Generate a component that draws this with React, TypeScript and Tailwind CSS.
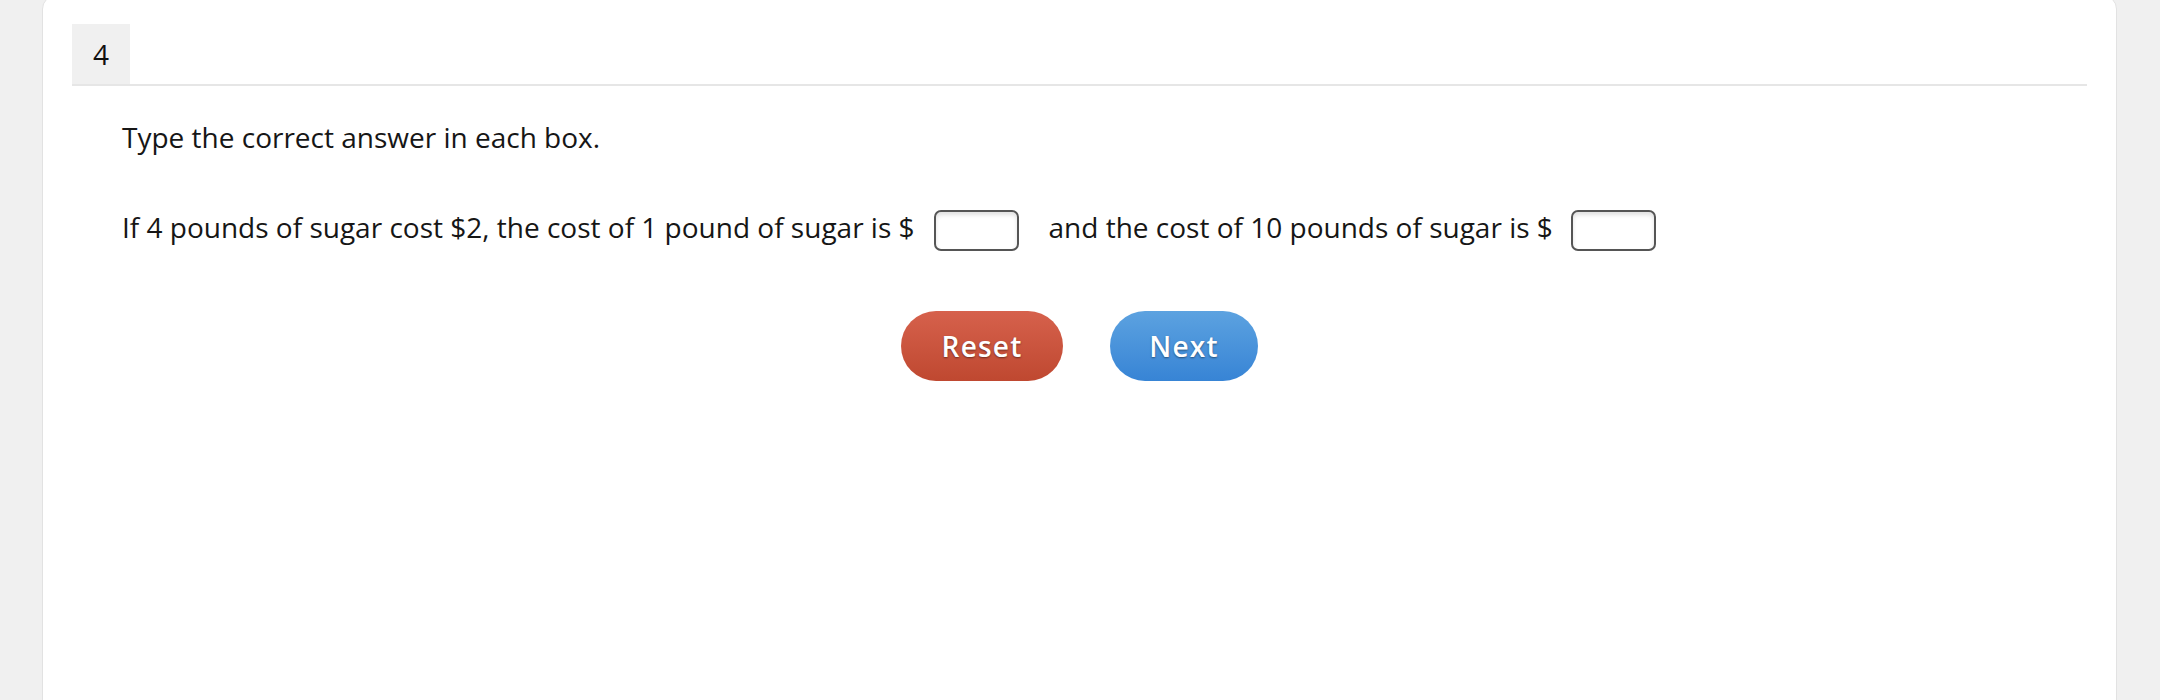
import React from "react";

function AnswerBox() {
  return (
    <input
      type="text"
      aria-label="answer"
      className="block w-[85px] h-[41px] rounded-[7px] border-2 border-[#555555] bg-white p-0 shadow-[inset_0_3px_4px_rgba(0,0,0,0.12)] outline-none"
    />
  );
}

export default function App() {
  return (
    <div
      className="w-[2160px] h-[700px] overflow-hidden bg-[#f0f0f0] pl-[42px] pr-[43px]"
      style={{ fontFamily: '"Open Sans", "Liberation Sans", sans-serif' }}
    >
      <div className="-mt-[5px] h-[740px] rounded-[14px] border border-[#e2e2e2] bg-white px-[29px] pt-[28px] text-[#161616]">
        <div className="flex border-b-2 border-[#e6e6e6]">
          <div className="flex h-[60px] w-[58px] items-center justify-center bg-[#f0f0f0] text-[28px] font-medium leading-none text-[#111]">
            4
          </div>
        </div>
        <div className="px-[50px] pt-[30px] text-[28px] leading-[1.5]">
          <p>Type the correct answer in each box.</p>
          <p className="mt-[48px]">
            If 4 pounds of sugar cost $2, the cost of 1 pound of sugar is $
            <span className="ml-[19px] mr-[30px] inline-block align-middle">
              <AnswerBox />
            </span>
            and the cost of 10 pounds of sugar is $
            <span className="ml-[18px] inline-block align-middle">
              <AnswerBox />
            </span>
          </p>
        </div>
        <div className="mt-[60px] flex justify-center gap-[47px]">
          <button className="h-[70px] w-[162px] rounded-full bg-gradient-to-b from-[#d6614c] to-[#bf4830] text-[28px] font-semibold tracking-[1.2px] text-white [text-shadow:0_1px_2px_rgba(0,0,0,0.45)]">
            Reset
          </button>
          <button className="h-[70px] w-[148px] rounded-full bg-gradient-to-b from-[#5ca2e0] to-[#3784d5] text-[28px] font-semibold tracking-[1.2px] text-white [text-shadow:0_1px_2px_rgba(0,0,0,0.45)]">
            Next
          </button>
        </div>
      </div>
    </div>
  );
}
